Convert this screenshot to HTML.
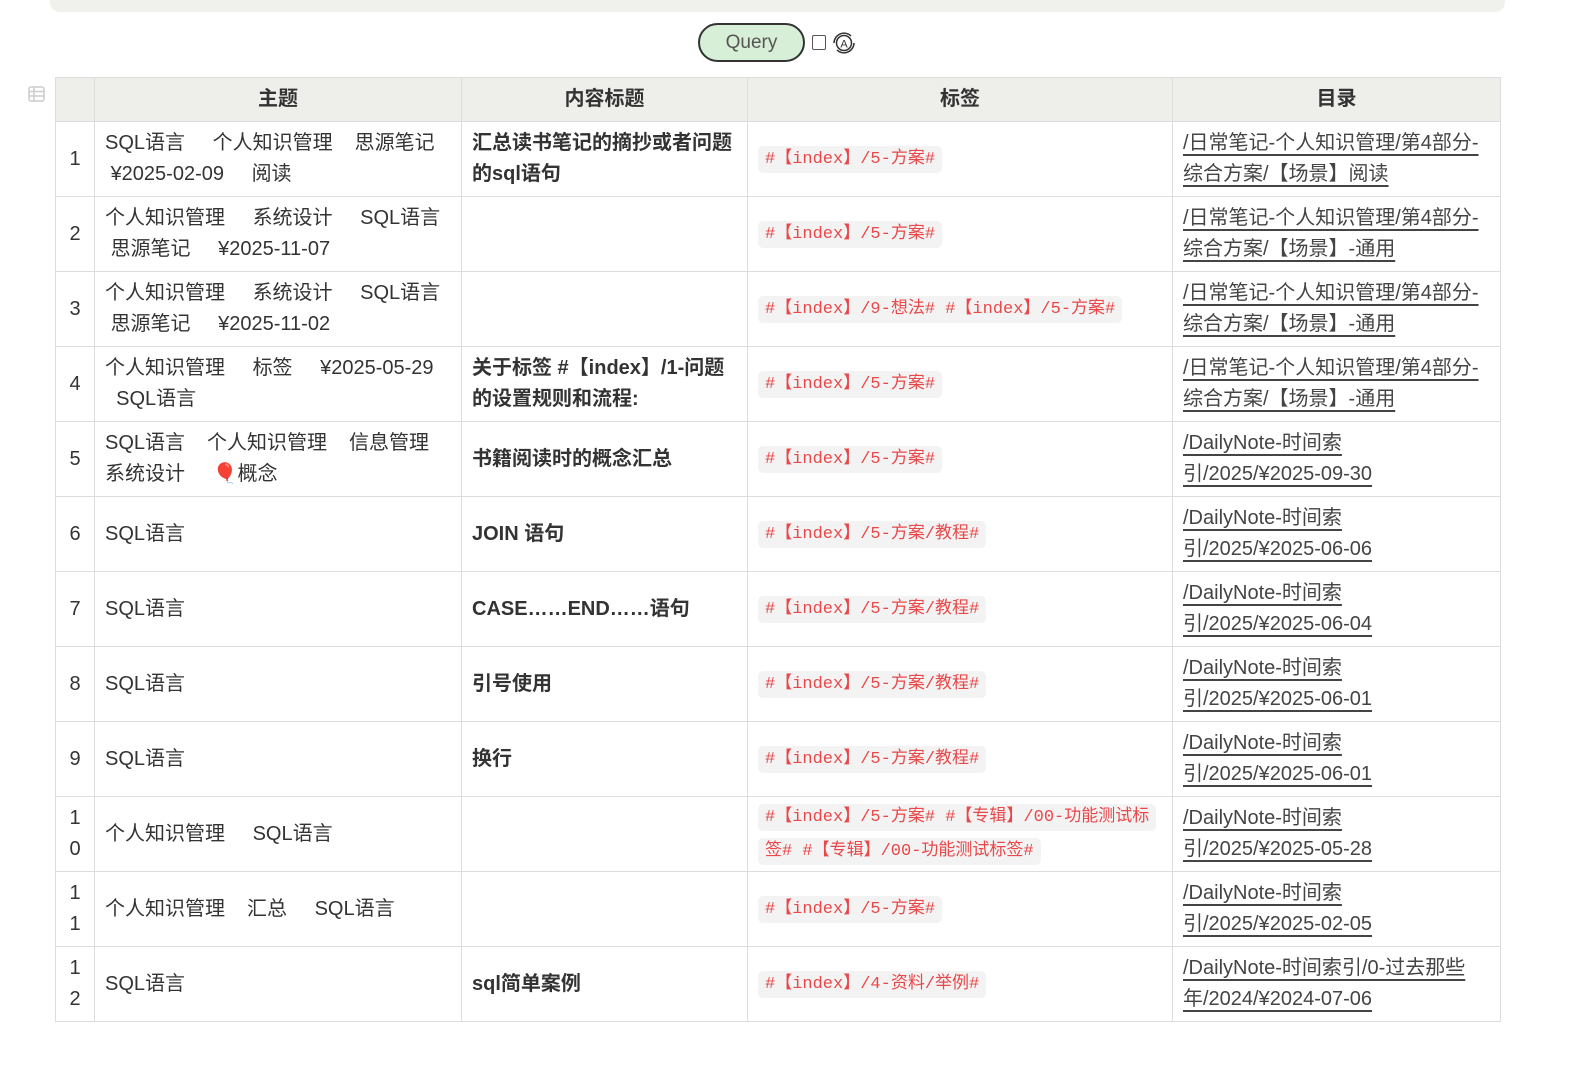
<!DOCTYPE html>
<html><head><meta charset="utf-8"><style>
body{margin:0;background:#fff;width:1587px;height:1068px;overflow:hidden;font-family:"Liberation Sans","Noto Sans CJK SC",sans-serif;color:#333;}
.top{position:absolute;left:50px;top:0;width:1455px;height:12px;background:#f0f1ec;border-radius:0 0 10px 10px;}
.q{position:absolute;left:698px;top:23px;width:103px;height:35px;border:2px solid #333;border-radius:20px;background:#d8efd7;color:#555;font-size:19px;text-align:center;line-height:35px;}
.cb{position:absolute;left:812px;top:35px;width:12px;height:13px;border:1.5px solid #555;border-radius:2px;}
.ic{position:absolute;left:28px;top:86px;}
table{position:absolute;left:55px;top:77px;border-collapse:collapse;font-size:20px;table-layout:fixed;width:1445px;}
td,th{border:1.5px solid #ddd;padding:0 10px;vertical-align:middle;line-height:31px;overflow:hidden;}
th{background:#eeefea;height:43px;font-weight:bold;font-size:20px;}
td{height:74px;}
td.n{text-align:center;padding:0;}
td.b{font-weight:bold;}
.s{white-space:nowrap;}
.s span{margin-right:22px;}
.t{font-family:"Liberation Mono","Noto Sans CJK SC",monospace;color:#e8484a;background:#f3f3f3;font-size:17px;padding:4px 7px;border-radius:5px;line-height:32px;-webkit-box-decoration-break:clone;box-decoration-break:clone;}
.l{text-decoration:underline;text-underline-offset:5px;color:#444;}
</style></head><body>
<div class="top"></div>
<div class="q">Query</div>
<div class="cb"></div>
<svg style="position:absolute;left:830px;top:29px" width="28" height="28" viewBox="0 0 28 28"><path d="M4 14a10 10 0 0 1 17-7M24 14a10 10 0 0 1-17 7" fill="none" stroke="#333" stroke-width="1.5"/><circle cx="14" cy="14" r="7.5" fill="none" stroke="#333" stroke-width="1.5"/><text x="14" y="18.5" font-size="11" text-anchor="middle" font-family="Liberation Sans" fill="#333">A</text></svg>
<svg class="ic" width="17" height="16" viewBox="0 0 17 16"><rect x="1" y="1" width="15" height="14" rx="2" fill="none" stroke="#ccc" stroke-width="1.5"/><path d="M6 1v14M1 5.5h15M1 10h15" stroke="#ccc" stroke-width="1.5"/></svg>
<table>
<colgroup><col style="width:39px"><col style="width:367px"><col style="width:286px"><col style="width:425px"><col style="width:328px"></colgroup>
<tr><th></th><th>主题</th><th>内容标题</th><th>标签</th><th>目录</th></tr>
<tr><td class="n">1</td><td class="s"><span>SQL语言</span> <span>个人知识管理</span><span>思源笔记</span><br>&nbsp;<span>¥2025-02-09</span> <span>阅读</span></td><td class="b">汇总读书笔记的摘抄或者问题的sql语句</td><td><span class="t">#【index】/5-方案#</span></td><td><span class="l">/日常笔记-个人知识管理/第4部分-综合方案/【场景】阅读</span></td></tr>
<tr><td class="n">2</td><td class="s"><span>个人知识管理</span> <span>系统设计</span> <span>SQL语言</span><br>&nbsp;<span>思源笔记</span> <span>¥2025-11-07</span></td><td></td><td><span class="t">#【index】/5-方案#</span></td><td><span class="l">/日常笔记-个人知识管理/第4部分-综合方案/【场景】-通用</span></td></tr>
<tr><td class="n">3</td><td class="s"><span>个人知识管理</span> <span>系统设计</span> <span>SQL语言</span><br>&nbsp;<span>思源笔记</span> <span>¥2025-11-02</span></td><td></td><td><span class="t">#【index】/9-想法# #【index】/5-方案#</span></td><td><span class="l">/日常笔记-个人知识管理/第4部分-综合方案/【场景】-通用</span></td></tr>
<tr><td class="n">4</td><td class="s"><span>个人知识管理</span> <span>标签</span> <span>¥2025-05-29</span><br>&nbsp;&nbsp;<span>SQL语言</span></td><td class="b">关于标签 #【index】/1-问题 的设置规则和流程:</td><td><span class="t">#【index】/5-方案#</span></td><td><span class="l">/日常笔记-个人知识管理/第4部分-综合方案/【场景】-通用</span></td></tr>
<tr><td class="n">5</td><td class="s"><span>SQL语言</span><span>个人知识管理</span><span>信息管理</span><br><span>系统设计</span> <span>🎈概念</span></td><td class="b">书籍阅读时的概念汇总</td><td><span class="t">#【index】/5-方案#</span></td><td><span class="l">/DailyNote-时间索<br>引/2025/¥2025-09-30</span></td></tr>
<tr><td class="n">6</td><td>SQL语言</td><td class="b">JOIN 语句</td><td><span class="t">#【index】/5-方案/教程#</span></td><td><span class="l">/DailyNote-时间索<br>引/2025/¥2025-06-06</span></td></tr>
<tr><td class="n">7</td><td>SQL语言</td><td class="b">CASE……END……语句</td><td><span class="t">#【index】/5-方案/教程#</span></td><td><span class="l">/DailyNote-时间索<br>引/2025/¥2025-06-04</span></td></tr>
<tr><td class="n">8</td><td>SQL语言</td><td class="b">引号使用</td><td><span class="t">#【index】/5-方案/教程#</span></td><td><span class="l">/DailyNote-时间索<br>引/2025/¥2025-06-01</span></td></tr>
<tr><td class="n">9</td><td>SQL语言</td><td class="b">换行</td><td><span class="t">#【index】/5-方案/教程#</span></td><td><span class="l">/DailyNote-时间索<br>引/2025/¥2025-06-01</span></td></tr>
<tr><td class="n">1<br>0</td><td class="s"><span>个人知识管理</span> <span>SQL语言</span></td><td></td><td><span class="t">#【index】/5-方案# #【专辑】/00-功能测试标签# #【专辑】/00-功能测试标签#</span></td><td><span class="l">/DailyNote-时间索<br>引/2025/¥2025-05-28</span></td></tr>
<tr><td class="n">1<br>1</td><td class="s"><span>个人知识管理</span><span>汇总</span> <span>SQL语言</span></td><td></td><td><span class="t">#【index】/5-方案#</span></td><td><span class="l">/DailyNote-时间索<br>引/2025/¥2025-02-05</span></td></tr>
<tr><td class="n">1<br>2</td><td>SQL语言</td><td class="b">sql简单案例</td><td><span class="t">#【index】/4-资料/举例#</span></td><td><span class="l">/DailyNote-时间索引/0-过去那些年/2024/¥2024-07-06</span></td></tr>
</table>
</body></html>
